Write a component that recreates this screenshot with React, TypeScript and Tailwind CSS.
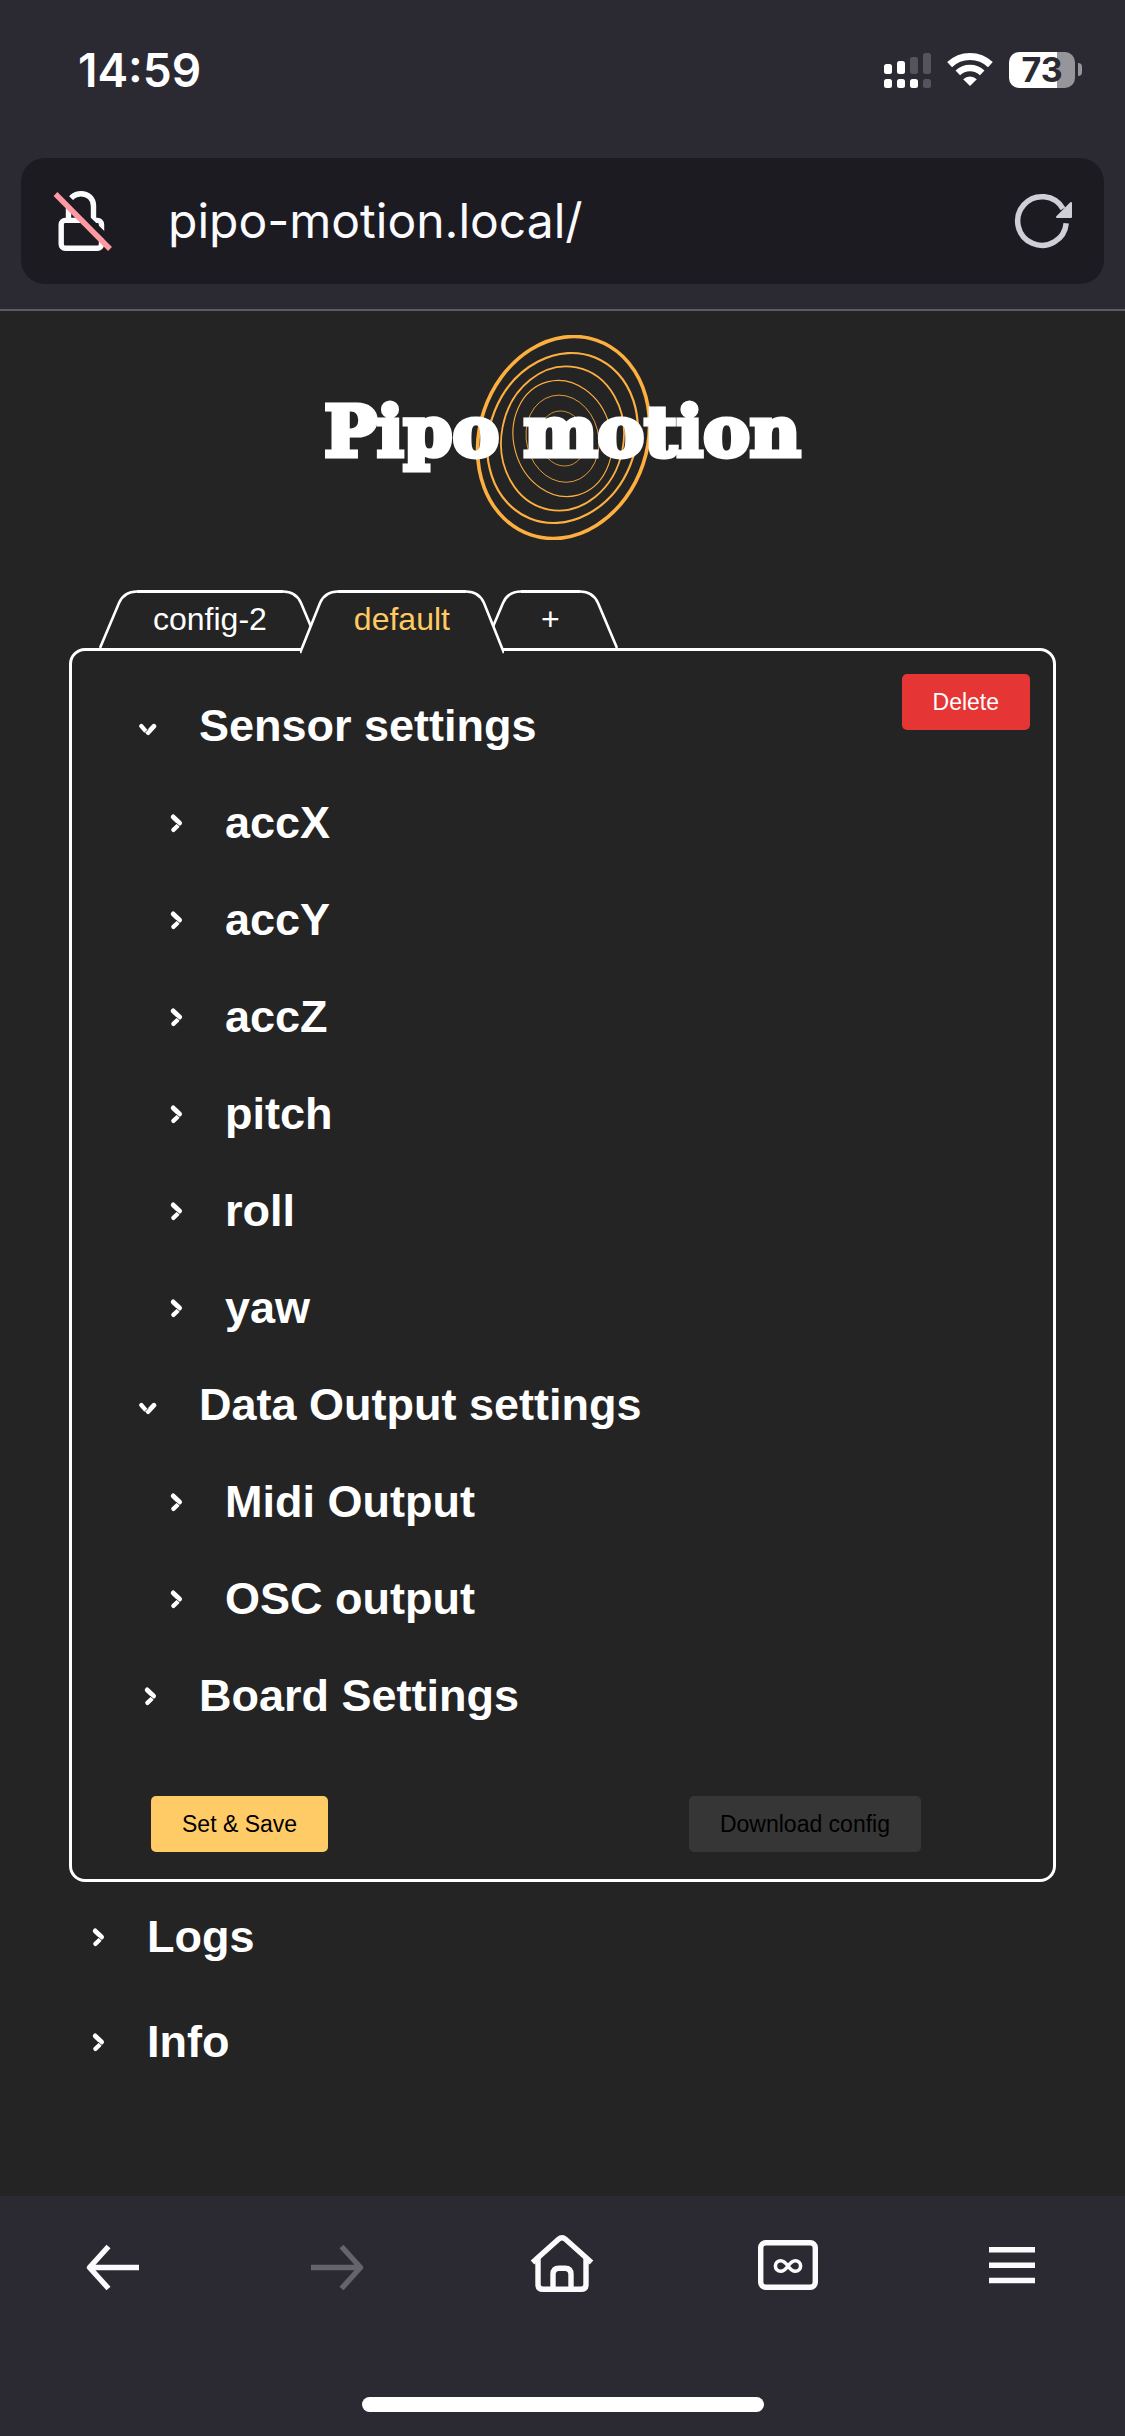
import { useState, type ReactNode } from "react";

const sans = "font-['Liberation_Sans',Arial,sans-serif]";
const ui = "font-[Inter,sans-serif]";

function SignalIcon() {
  return (
    <svg width="47" height="36" viewBox="0 0 47 36" fill="#fff" role="img" aria-label="Signal">
      <rect x="0" y="12" width="8" height="10" rx="2.5" />
      <rect x="13" y="9" width="8" height="13" rx="2.5" />
      <rect x="26" y="5" width="8" height="17" rx="2.5" fill="#55545c" />
      <rect x="39" y="1" width="8" height="21" rx="2.5" fill="#55545c" />
      <rect x="0" y="27" width="8" height="9" rx="2.5" />
      <rect x="13" y="27" width="8" height="9" rx="2.5" />
      <rect x="26" y="27" width="8" height="9" rx="2.5" />
      <rect x="39" y="27" width="8" height="9" rx="2.5" fill="#55545c" />
    </svg>
  );
}

function WifiIcon() {
  return (
    <svg width="46" height="36" viewBox="0 0 46 36" fill="none" stroke="#fff" role="img" aria-label="Wi-Fi">
      <path d="M2.6 12.6A29.5 29.5 0 0 1 43.4 12.6" strokeWidth="7" />
      <path d="M10.8 20.9A17.6 17.6 0 0 1 35.2 20.9" strokeWidth="6.6" />
      <path d="M23 34L16.2 27.2A10 10 0 0 1 29.8 27.2Z" fill="#fff" stroke="none" />
    </svg>
  );
}

function Battery() {
  return (
    <div className="flex items-center gap-[3px]">
      <div className={`${ui} flex h-9 w-[66px] items-center justify-center rounded-[10px] bg-[linear-gradient(to_right,#fff_48px,#96959a_48px)] text-[34px] leading-9 font-bold text-[#2b2a33]`}>
        73
      </div>
      <div className="h-[13px] w-1 rounded-r-full bg-[#96959a]" />
    </div>
  );
}

function InsecureIcon() {
  return (
    <svg width="72" height="72" viewBox="0 0 72 72" fill="none" role="img" aria-label="Connection not secure">
      <g stroke="#fbfbfe" strokeWidth="5.4">
        <path d="M21.5 35V21C21.5 13.500 27 8.700 34 8.700S46.500 13.500 46.500 21V35" />
        <rect x="14.200" y="35.400" width="40.300" height="27.900" rx="4" />
      </g>
      <path d="M11.500 5L67 60" stroke="#1c1b22" strokeWidth="6" />
      <path d="M8.500 9L63 64" stroke="#ff9aa2" strokeWidth="5.4" />
    </svg>
  );
}

function ReloadIcon() {
  return (
    <svg width="72" height="72" viewBox="0 0 72 72" fill="none">
      <path d="M60.200 38.200A24.300 24.300 0 1 1 57 23.800" stroke="#cfcfd8" strokeWidth="5.500" />
      <path d="M65 18V32H51Z" fill="#cfcfd8" stroke="#cfcfd8" strokeWidth="2" strokeLinejoin="round" />
    </svg>
  );
}

function Rings() {
  return (
    <svg className="col-start-1 row-start-1" width="180" height="205" viewBox="0 0 180 205" fill="none" stroke="#fdaf3f">
      <ellipse cx="90.500" cy="102.500" rx="83.900" ry="102.700" transform="rotate(18.500 90.500 102.500)" strokeWidth="3.600" />
      <ellipse cx="89.500" cy="103" rx="73" ry="86.800" transform="rotate(22 89.500 103)" strokeWidth="2.200" />
      <ellipse cx="89.500" cy="103.500" rx="61" ry="72.400" transform="rotate(11 89.500 103.500)" strokeWidth="1.800" />
      <ellipse cx="89.500" cy="103.500" rx="48.800" ry="58.600" transform="rotate(-15 89.500 103.500)" strokeWidth="1.100" />
      <ellipse cx="89.500" cy="103.700" rx="36" ry="44" transform="rotate(-14 89.500 103.700)" strokeWidth="0.800" />
      <ellipse cx="89.500" cy="103.500" rx="23" ry="27.800" transform="rotate(-14 89.500 103.500)" strokeWidth="0.700" />
    </svg>
  );
}

function TabEdge({ right = false, active }: { right?: boolean; active: boolean }) {
  const end = active ? 63 : 58;
  const x = active ? 0 : 1;
  return (
    <svg width="38" height="64" viewBox="0 0 38 64" fill="none" className={right ? "-scale-x-100" : ""}>
      <path d={`M38 1.500C29 1.500 23.500 5 20 13L${x} ${end}H38Z`} fill="#242424" />
      <path d={`M38 1.500C29 1.500 23.500 5 20 13L${x} ${end}`} stroke="#fff" strokeWidth="2.600" />
    </svg>
  );
}

function Tab({ label, active = false, first = false, onSelect }: { label: string; active?: boolean; first?: boolean; onSelect: () => void }) {
  return (
    <button
      type="button"
      role="tab"
      aria-selected={active}
      onClick={onSelect}
      className={`relative flex items-start ${first ? "" : "-ml-[21px]"} ${active ? "z-10 text-[#ffca62]" : "text-white"}`}
    >
      <TabEdge active={active} />
      <span
        className={`flex min-w-[59px] justify-center border-t-[3px] border-white bg-[#242424] px-4 pt-2 text-[32px] leading-[37px] ${active ? "h-16" : "h-[58px]"}`}
      >
        {label}
      </span>
      <TabEdge active={active} right />
    </button>
  );
}

function Chevron({ open }: { open: boolean }) {
  return (
    <svg width="24" height="24" viewBox="0 0 24 24" fill="none" stroke="#fff" strokeLinecap="round">
      {open ? (
        <>
          <path d="M2.300 12L6.500 16.800" strokeWidth="4.200" />
          <path d="M15 12.200L9 18.600" strokeWidth="4.800" />
          <path d="M5.500 19L9 15.500" stroke="#242424" strokeWidth="0.800" />
        </>
      ) : (
        <>
          <path d="M8.200 5.900L14.600 12" strokeWidth="4.800" />
          <path d="M8.400 18.800L12.500 15" strokeWidth="4.400" />
          <path d="M11.500 12.500L15.500 16" stroke="#242424" strokeWidth="0.800" />
        </>
      )}
    </svg>
  );
}

function Section({ title, tall = false, initiallyOpen = false, children }: { title: string; tall?: boolean; initiallyOpen?: boolean; children?: ReactNode }) {
  const [open, setOpen] = useState(initiallyOpen);
  return (
    <section>
      <h2>
        <button
          type="button"
          aria-expanded={open}
          onClick={() => setOpen(!open)}
          className={`flex items-center gap-9 text-left text-[45px] leading-[53px] font-bold ${tall ? "py-[26px]" : "py-[22px]"}`}
        >
          <Chevron open={open} />
          {title}
        </button>
      </h2>
      {open && <div className="pl-[26px]">{children}</div>}
    </section>
  );
}

const button = "h-14 rounded-[5px] px-[31px] text-[23px] leading-[26px]";

function ToolbarButton({ label, disabled = false, children }: { label: string; disabled?: boolean; children: ReactNode }) {
  return (
    <button type="button" aria-label={label} disabled={disabled} className="flex justify-center text-[#fbfbfe] disabled:text-[#65646c]">
      <svg width="72" height="72" viewBox="0 0 72 72" fill="none" stroke="currentColor" strokeWidth="5.400">
        {children}
      </svg>
    </button>
  );
}

export default function App() {
  const [tab, setTab] = useState("default");
  return (
    <div className={`${sans} flex min-h-screen flex-col bg-[#242424] text-white`}>
      <header className={`${ui} border-b-2 border-[#5b5b69] bg-[#2b2a33] px-[21px] pb-[25px]`}>
        <div className="flex h-[139px] items-center justify-between pr-[22px] pl-[57px]">
          <time className="text-[46px] leading-none font-semibold">14:59</time>
          <div className="flex items-center gap-4">
            <SignalIcon />
            <WifiIcon />
            <Battery />
          </div>
        </div>
        <div className="mt-[19px] flex h-[126px] items-center rounded-[24px] bg-[#1c1b22] px-[26px]">
          <InsecureIcon />
          <input
            type="text"
            aria-label="Address"
            defaultValue="pipo-motion.local/"
            className="ml-[49px] min-w-0 flex-1 bg-transparent text-[48px] leading-[62px] text-[#fbfbfe] outline-none"
          />
          <button type="button" aria-label="Reload">
            <ReloadIcon />
          </button>
        </div>
      </header>

      <main className="flex-1 px-[69px] pt-6">
        <div className="grid place-items-center">
          <Rings />
          <h1 className="col-start-1 row-start-1 pb-3 font-['DejaVu_Serif',serif] text-[70px] leading-none font-bold whitespace-nowrap [-webkit-text-stroke:5px_white]">
            Pipo motion
          </h1>
        </div>

        <div role="tablist" className="mt-[50px] flex h-[58px] items-start pl-[30px]">
          <Tab label="config-2" first active={tab === "config-2"} onSelect={() => setTab("config-2")} />
          <Tab label="default" active={tab === "default"} onSelect={() => setTab("default")} />
          <Tab label="+" active={tab === "+"} onSelect={() => setTab("+")} />
        </div>

        <div role="tabpanel" className="rounded-[16px] border-[3px] border-white pt-[23px] pr-[23px] pb-[27px] pl-[67px]">
          <div className="flex items-start justify-between">
            <div className="pt-[3px]">
              <Section title="Sensor settings" initiallyOpen>
                <Section title="accX" />
                <Section title="accY" />
                <Section title="accZ" />
                <Section title="pitch" />
                <Section title="roll" />
                <Section title="yaw" />
              </Section>
            </div>
            <button type="button" className={`${button} bg-[#e53535] text-white`}>
              Delete
            </button>
          </div>
          <Section title="Data Output settings" initiallyOpen>
            <Section title="Midi Output" />
            <Section title="OSC output" />
          </Section>
          <Section title="Board Settings" />
          <div className="mt-[52px] flex justify-between pr-[109px] pl-3">
            <button type="button" className={`${button} bg-[#ffcb66] text-black`}>
              Set &amp; Save
            </button>
            <button type="button" disabled className={`${button} bg-[#363636] text-black`}>
              Download config
            </button>
          </div>
        </div>

        <div className="mt-0.5 pl-[18px]">
          <Section title="Logs" tall />
          <Section title="Info" tall />
        </div>
      </main>

      <footer className="bg-[#2b2a33] pt-[33px] pb-6">
        <nav aria-label="Browser" className="grid grid-cols-5">
          <ToolbarButton label="Back">
            <path d="M62 38.500H12M31.500 17.500L12.500 38.500L31.500 59.500" strokeLinejoin="round" />
          </ToolbarButton>
          <ToolbarButton label="Forward" disabled>
            <path d="M9 38.500H59M39.500 17.500L58.500 38.500L39.500 59.500" strokeLinejoin="round" />
          </ToolbarButton>
          <ToolbarButton label="Home">
            <path d="M5.500 33.500L31.500 10.300Q35 7.300 38.500 10.300L64.500 33.500" />
            <path d="M11 28V55.500Q11 60.300 16 60.300H54Q59 60.300 59 55.500V28" />
            <path d="M26 60V45.500Q26 39.300 32 39.300H38Q44 39.300 44 45.500V60" />
          </ToolbarButton>
          <ToolbarButton label="Tabs">
            <rect x="8.700" y="13.700" width="54.600" height="44.600" rx="5" />
            <path
              d="M36 37C33.500 40.500 31.500 42.300 28.700 42.300A5.300 5.300 0 0 1 28.700 31.700C31.500 31.700 33.500 33.500 36 37S40.500 42.300 43.300 42.300A5.300 5.300 0 0 0 43.300 31.700C40.500 31.700 38.500 33.500 36 37Z"
              strokeWidth="3.600"
            />
          </ToolbarButton>
          <ToolbarButton label="Menu">
            <path d="M12 20.700H58M12 36.300H58M12 51.500H58" />
          </ToolbarButton>
        </nav>
        <div className="mx-auto mt-24 h-[15px] w-[402px] rounded-full bg-white" />
      </footer>
    </div>
  );
}
